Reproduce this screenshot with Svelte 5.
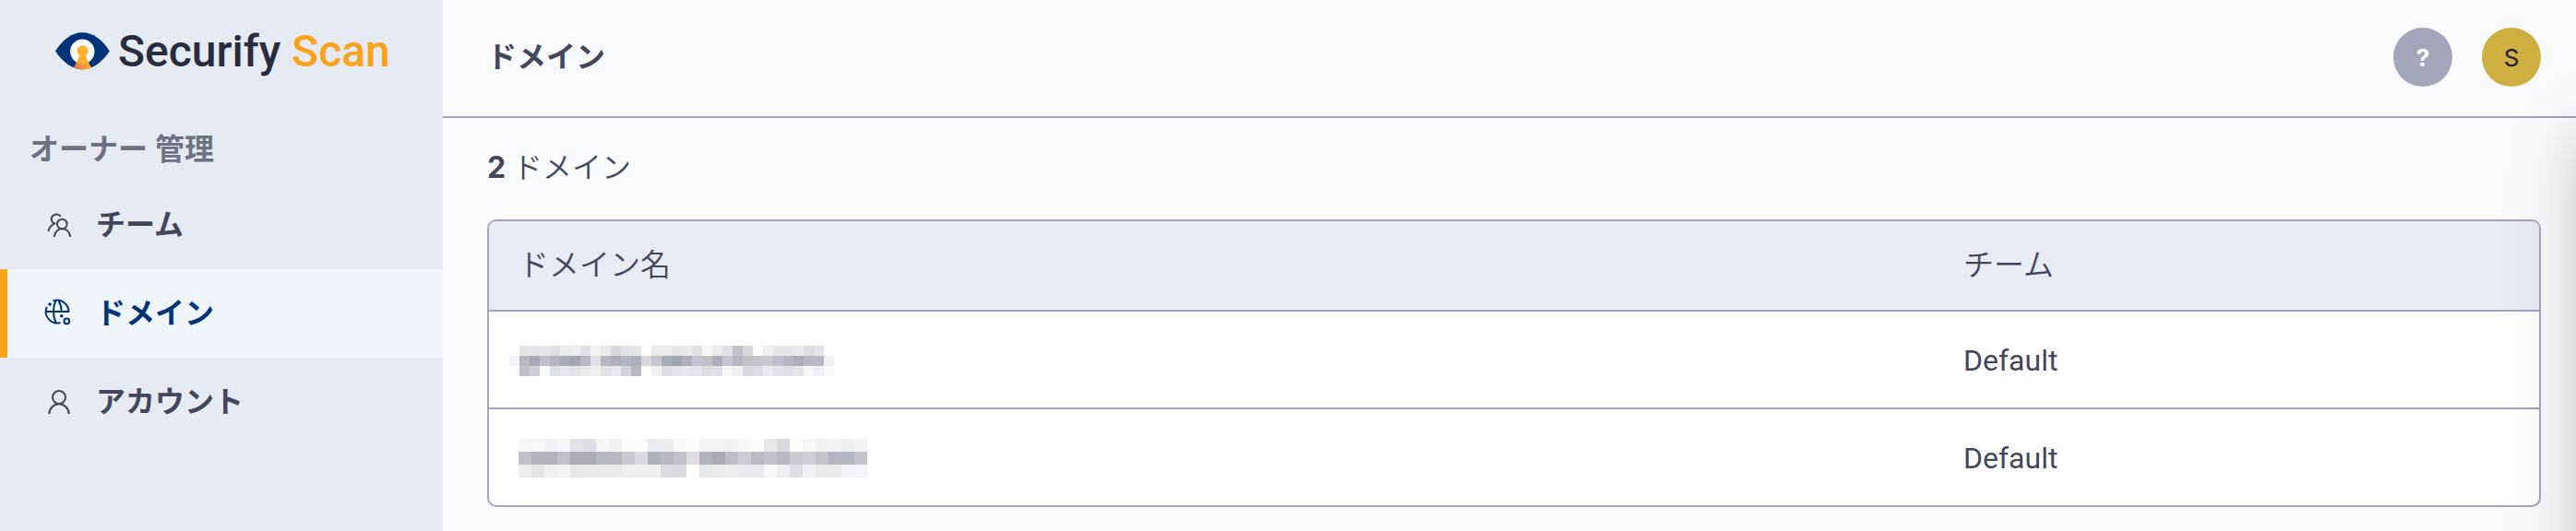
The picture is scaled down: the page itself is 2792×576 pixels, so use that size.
<!-- ─────────────────────────────────────────────────────────────
     App.svelte
     Owner console: sidebar navigation and the domain list.
───────────────────────────────────────────────────────────── -->

<script lang="ts">
  type Mosaic = { cell: number; rows: string[] };

  const nav = [
    { id: "team", label: "チーム" },
    { id: "domain", label: "ドメイン" },
    { id: "account", label: "アカウント" },
  ];

  let active = "domain";

  // Domain names are masked: each row lists the cell colours left to right
  const domains: { mask: Mosaic; team: string }[] = [
    {
      team: "Default",
      mask: {
        cell: 11,
        rows: [
          "fefefe e5e5e7 e3e4e8 e6e6e9 e0e0e3 ebebed eeeef0 e0e1e6 f3f3f4 e9ebec d7d8dc e1e2e4 e3e4e6 fdfdfd e9ebed ebebed e5e5e7 e9e9ec e2e2e4 f7f7f7 ebebee e1e0e5 c1c1c6 d7d8dc fbfbfb eeeef0 e6e6e8 e6e6e8 e8e9ec dcdce1 e3e4e8 fefefe",
          "f1f3f6 b8b8c1 a9a9b3 c0c0cb b2b5bf a8abb4 a5a8b0 b8b7c3 e0e1e5 b5b5c0 adb0ba b4b7c2 adb1ba d7d8dd c6c7cc a8acb5 a3a6ae adb0b9 c4c4cf c0c1c5 adafb7 c5c5d1 b6b6c2 c1c1c7 c5c5c9 c8c8cd bebecb b4b7c3 adadb7 b7b7c2 b8b8c3 f1f1f2",
          "ffffff c0c0cb cdcdd5 f8f8f8 dddfe6 e7e8eb e4e4e7 e9eaec eeeff1 e2e2e5 e6e6eb d4d4db b9bac0 fdfdfd f2f2f3 dedee1 e4e4e8 e8e8ea e5e5e8 dddde2 e1e1e5 f6f6f6 f0f0f3 d9d9de dcdce1 eaeaed e3e3e7 e0e0e4 e5e5e9 f5f5f5 eeeff2 fafafa",
        ],
      },
    },
    {
      team: "Default",
      mask: {
        cell: 14,
        rows: [
          "f6f6f6 f7f7f7 f1f2f5 f5f6f7 e2e3e8 dddee3 f5f6f6 f2f2f3 fcfcfc fcfcfc ebebee ededef f8faf9 fcfcfc f4f4f4 f4f4f5 f1f1f4 f8f8f9 fafcfb e6e7e9 d9d9de fdfdfd f7f7f8 f2f2f4 f3f3f5 efeff2 f3f3f4",
          "c0c1c7 b1b2bc b3b3bd c0c0cb adadb7 acacb7 b5b9c4 b7b7c2 c8c8ce d9dade adb1b9 b8b8c3 c1c1cc dddde1 b1b4be ababb5 bebec9 cccdd3 babac5 c1c1c8 b8b8c5 cacad0 cfcfd4 c2c2c8 b5b6c1 b2b6c1 c3c3ca",
          "eeeeef e5e5e7 f0f0f1 f3f3f3 e7e8ea e9e9ea e9eaeb e9eaeb eeeff1 eeeff0 eeeff0 dadbdf d8dade fdfdfd e7e8ea ebecee edeeef e8e9ec e9e9ed f7f7f7 efeff1 dddde2 eff0f2 e9e9ec e9e9ec f2f4f7 f3f5f8",
        ],
      },
    },
  ];

  function cells(row: string) { return row.split(" "); }
</script>

<div class="page">
  <aside class="sidebar">
    <a class="logo" href="#home">
      <svg class="eye" viewBox="0 0 59 42" aria-hidden="true">
        <defs>
          <linearGradient id="beam" x1="0" x2="1">
            <stop offset="0" stop-color="#e0784f" />
            <stop offset="1" stop-color="#fdb02f" />
          </linearGradient>
        </defs>
        <path fill="#003478" d="M0 20.5C8 8 18 .3 29.3 .3S51 8 58.7 20.5C51 32 41 40.3 29.3 40.3S8 32 0 20.5z" />
        <circle cx="29.3" cy="20.8" r="13.2" fill="#fff" />
        <path fill="url(#beam)" d="M23 32.3q6.3 3 12.8 0L39.3 38.8Q29.5 42 19.5 38.8z" />
        <path fill="#ffb12e" d="M27 23h5l4 10q-6.5 3.5-13 0z" />
        <circle cx="29.5" cy="20.3" r="6" fill="#ffb12e" />
      </svg>
      <span class="brand">Securify <span class="product">Scan</span></span>
    </a>

    <h2 class="section">オーナー 管理</h2>

    <nav>
      {#each nav as item (item.id)}
        <a
          class="nav-item"
          class:active={active === item.id}
          href={`#${item.id}`}
          on:click={() => (active = item.id)}
        >
          <svg class="icon" viewBox="0 0 32 32" aria-hidden="true">
            {#if item.id === "team"}
              <circle cx="21.3" cy="15" r="5.3" />
              <path d="M13 29a8.5 9 0 0 1 17 0" />
              <path d="M19.8 6.8A5.6 5.6 0 0 0 9.7 10Q10 13.3 13 14.7Q7.3 17.5 6.5 23" />
            {:else if item.id === "domain"}
              <path d="M11.5 2.5A12.4 12.4 0 0 1 28.4 14H3.6" />
              <path d="M4.8 9A12.4 12.4 0 0 0 19.5 26" />
              <path d="M14.5 2C11 9 11 19 14.8 26.2M17.5 2Q20.5 7 20.7 14" />
              <circle class="dot" cx="8" cy="6" r="1.8" />
              <circle class="dot" cx="20.7" cy="18.7" r="1.8" />
              <circle cx="26.3" cy="24.3" r="2.9" />
            {:else}
              <circle cx="18" cy="11" r="7" />
              <path d="M7.3 29a10.7 10.7 0 0 1 21.4 0" />
            {/if}
          </svg>
          <span>{item.label}</span>
        </a>
      {/each}
    </nav>
  </aside>

  <main class="main">
    <header class="header">
      <h1 class="title">ドメイン</h1>
      <div class="actions">
        <button class="round help">?</button>
        <button class="round avatar">S</button>
      </div>
    </header>

    <section class="content">
      <p class="count"><strong>{domains.length}</strong> ドメイン</p>

      <div class="card">
        <table>
          <thead>
            <tr>
              <th scope="col">ドメイン名</th>
              <th scope="col" class="team">チーム</th>
            </tr>
          </thead>
          <tbody>
            {#each domains as { mask, team }}
              <tr>
                <td>
                  <svg
                    class="mask"
                    class:wide={mask.cell === 11}
                    width={cells(mask.rows[0]).length * mask.cell}
                    height={mask.rows.length * mask.cell}
                    aria-hidden="true"
                  >
                    {#each mask.rows as row, y}
                      {#each cells(row) as color, x}
                        <rect
                          x={x * mask.cell}
                          y={y * mask.cell}
                          width={mask.cell}
                          height={mask.cell}
                          fill={`#${color}`}
                        />
                      {/each}
                    {/each}
                  </svg>
                </td>
                <td class="team">{team}</td>
              </tr>
            {/each}
          </tbody>
        </table>
      </div>
    </section>
  </main>

  <!-- closed drawer, only its shadow reaches the page -->
  <div class="drawer"></div>
</div>

<style>
  :global(body) { background: #f9fbfd; }

  .page {
    position: relative;
    display: flex;
    min-height: 100vh;
    overflow: hidden;
    color: #44475c;
    font-family: Roboto, "Noto Sans CJK JP", sans-serif;
    font-size: 32px;
    line-height: 48px;
  }

  h1, h2, p { margin: 0; font-size: 32px; }
  a { color: inherit; text-decoration: none; }

  /* sidebar */
  .sidebar {
    flex: 0 0 480px;
    background: #e5eaf3;
  }

  .logo {
    display: flex;
    align-items: center;
    gap: 9px;
    height: 112px;
    padding-left: 60px;
  }
  .eye { width: 59px; height: 42px; }

  .brand {
    color: #292b41;
    font-size: 48px;
    font-weight: 500;
  }
  .product { color: #f9a31c; }

  .section {
    padding: 26px 32px 10px;
    color: #6e7083;
    font-weight: 600;
  }

  .nav-item {
    display: flex;
    align-items: center;
    gap: 26px;
    height: 96px;
    padding-left: 38px;
    border-left: 8px solid transparent;
    font-weight: 600;
  }
  .nav-item.active {
    border-left-color: #f9a31c;
    background: #eff5f9;
    color: #003478;
  }

  .icon {
    width: 32px;
    height: 32px;
    fill: none;
    stroke: currentColor;
    stroke-width: 2;
  }
  .dot { fill: currentColor; stroke: none; }

  /* main */
  .main {
    flex: 1;
    min-width: 0;
    background: #f9fbfd;
  }

  .header {
    display: flex;
    align-items: center;
    justify-content: space-between;
    padding: 30px 38px 32px 48px;
    border-bottom: 2px solid #a3a6ba;
  }
  .title { font-weight: 700; }

  .actions { display: flex; gap: 32px; }

  .round {
    width: 64px;
    height: 64px;
    padding: 0;
    border: none;
    border-radius: 50%;
    font-family: Inter, sans-serif;
    font-size: 26px;
    cursor: pointer;
  }
  .help {
    background: #a3a6ba;
    color: #fff;
    font-weight: 700;
  }
  .avatar {
    background: #cfae42;
    color: #1a202c;
  }

  .content { padding: 30px 38px 26px 48px; }

  .count {
    margin-bottom: 32px;
    font-weight: 350;
  }
  .count strong {
    font-family: Inter, sans-serif;
    font-weight: 700;
  }

  .card {
    overflow: hidden;
    border: 2px solid #a3a6ba;
    border-radius: 10px;
    background: #fff;
  }

  table {
    width: 100%;
    border-collapse: separate;
    border-spacing: 0;
    table-layout: fixed;
  }

  th {
    height: 96px;
    padding: 0 32px;
    background: #e8ebf4;
    font-size: 33px;
    font-weight: 350;
    text-align: left;
  }
  td {
    box-sizing: content-box;
    height: 102px;
    padding: 2px 32px 0;
    border-top: 2px solid #a3a6ba;
  }
  .team { width: 592px; }

  .mask {
    display: block;
    shape-rendering: crispEdges;
  }
  .mask.wide { margin-left: -10px; }

  .drawer {
    position: absolute;
    top: 144px;
    bottom: -200px;
    left: 100%;
    width: 400px;
    box-shadow: 0 0 72px rgba(0, 0, 0, 0.22);
    pointer-events: none;
  }
</style>
